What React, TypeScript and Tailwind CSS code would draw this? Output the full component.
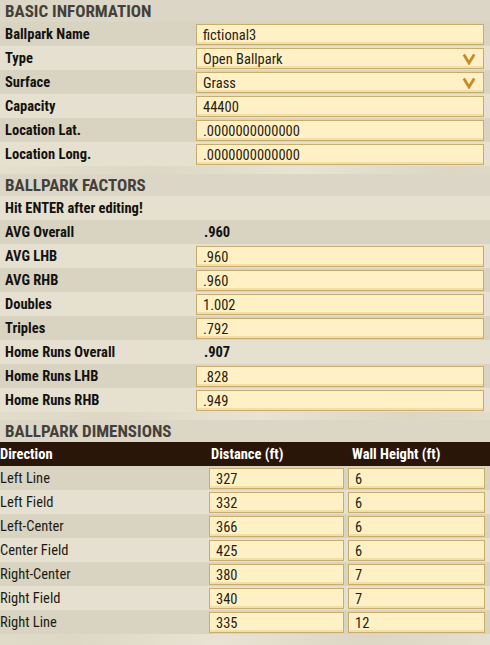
import React from 'react'

const FONT = { fontFamily: '"Roboto Condensed", "Liberation Sans Narrow", Roboto, sans-serif' }

function Arrow() {
  return (
    <svg width="14" height="12" viewBox="0 0 14 12" className="absolute right-[7px] top-[4px]">
      <path d="M1.8 1.5 L7 10 L12.2 1.5" fill="none" stroke="#c98a2c" strokeWidth="2.8" strokeLinejoin="miter" />
    </svg>
  )
}

function Field({ value, select, className = '' }: { value: string; select?: boolean; className?: string }) {
  return (
    <div
      className={`relative h-[21px] border border-[#c9ad6e] bg-[#fff1c5] pl-[6px] pt-[1px] text-[14.5px] leading-[19px] text-[#2a1d10] shadow-[inset_0_-2px_0_#f3dfa5] ${className}`}
    >
      {value}
      {select && <Arrow />}
    </div>
  )
}

function Header({ title, first }: { title: string; first?: boolean }) {
  return (
    <div
      className={`flex h-[22px] items-center bg-[#dbd6c5] px-[5px] pt-[1px] text-[17px] font-bold uppercase text-[#45403a] ${first ? '' : 'mt-[8px]'}`}
    >
      {title}
    </div>
  )
}

function Row({
  label,
  dark,
  children,
}: {
  label: string
  dark?: boolean
  children?: React.ReactNode
}) {
  return (
    <div className={`flex h-[24px] items-center ${dark ? 'bg-[#d9d3c1]' : 'bg-[#e5e0cf]'}`}>
      <div className="w-[196px] pl-[5px] pt-[1px] text-[14.5px] font-bold text-[#141210]">{label}</div>
      <div className="flex-1 pr-[6px]">{children}</div>
    </div>
  )
}

const basic: Array<[string, string, boolean?]> = [
  ['Ballpark Name', 'fictional3'],
  ['Type', 'Open Ballpark', true],
  ['Surface', 'Grass', true],
  ['Capacity', '44400'],
  ['Location Lat.', '.0000000000000'],
  ['Location Long.', '.0000000000000'],
]

const factors: Array<[string, string, boolean?]> = [
  ['AVG Overall', '.960', true],
  ['AVG LHB', '.960'],
  ['AVG RHB', '.960'],
  ['Doubles', '1.002'],
  ['Triples', '.792'],
  ['Home Runs Overall', '.907', true],
  ['Home Runs LHB', '.828'],
  ['Home Runs RHB', '.949'],
]

const dims: Array<[string, string, string]> = [
  ['Left Line', '327', '6'],
  ['Left Field', '332', '6'],
  ['Left-Center', '366', '6'],
  ['Center Field', '425', '6'],
  ['Right-Center', '380', '7'],
  ['Right Field', '340', '7'],
  ['Right Line', '335', '12'],
]

export default function App() {
  return (
    <div
      style={FONT}
      className="h-[645px] w-[490px] overflow-hidden bg-[linear-gradient(100deg,#e6e1d0_0%,#ddd7c4_30%,#e8e3d3_55%,#dcd6c3_80%,#e4dfce_100%)]"
    >
      <Header title="Basic Information" first />
      {basic.map(([label, value, select], i) => (
        <Row key={label} label={label} dark={i % 2 === 0}>
          <Field value={value} select={select} />
        </Row>
      ))}

      <Header title="Ballpark Factors" />
      <Row label="Hit ENTER after editing!" />
      {factors.map(([label, value, fixed], i) => (
        <Row key={label} label={label} dark={i % 2 === 0}>
          {fixed ? (
            <div className="pl-[8px] pt-[1px] text-[14.5px] font-bold text-[#141210]">{value}</div>
          ) : (
            <Field value={value} />
          )}
        </Row>
      ))}

      <Header title="Ballpark Dimensions" />
      <div className="flex h-[24px] items-center bg-[#2a1609] pt-[1px] text-[14.5px] font-bold text-white">
        <div className="w-[209px]">Direction</div>
        <div className="w-[139px] pl-[2px]">Distance (ft)</div>
        <div className="flex-1 pl-[4px]">Wall Height (ft)</div>
      </div>
      {dims.map(([label, dist, wall], i) => (
        <div key={label} className={`flex h-[24px] items-center ${i % 2 === 0 ? 'bg-[#d9d3c1]' : 'bg-[#e5e0cf]'}`}>
          <div className="w-[209px] pt-[1px] text-[14.5px] text-[#1d1a16]">{label}</div>
          <Field value={dist} className="w-[135px]" />
          <Field value={wall} className="ml-[4px] w-[137px]" />
        </div>
      ))}
    </div>
  )
}
